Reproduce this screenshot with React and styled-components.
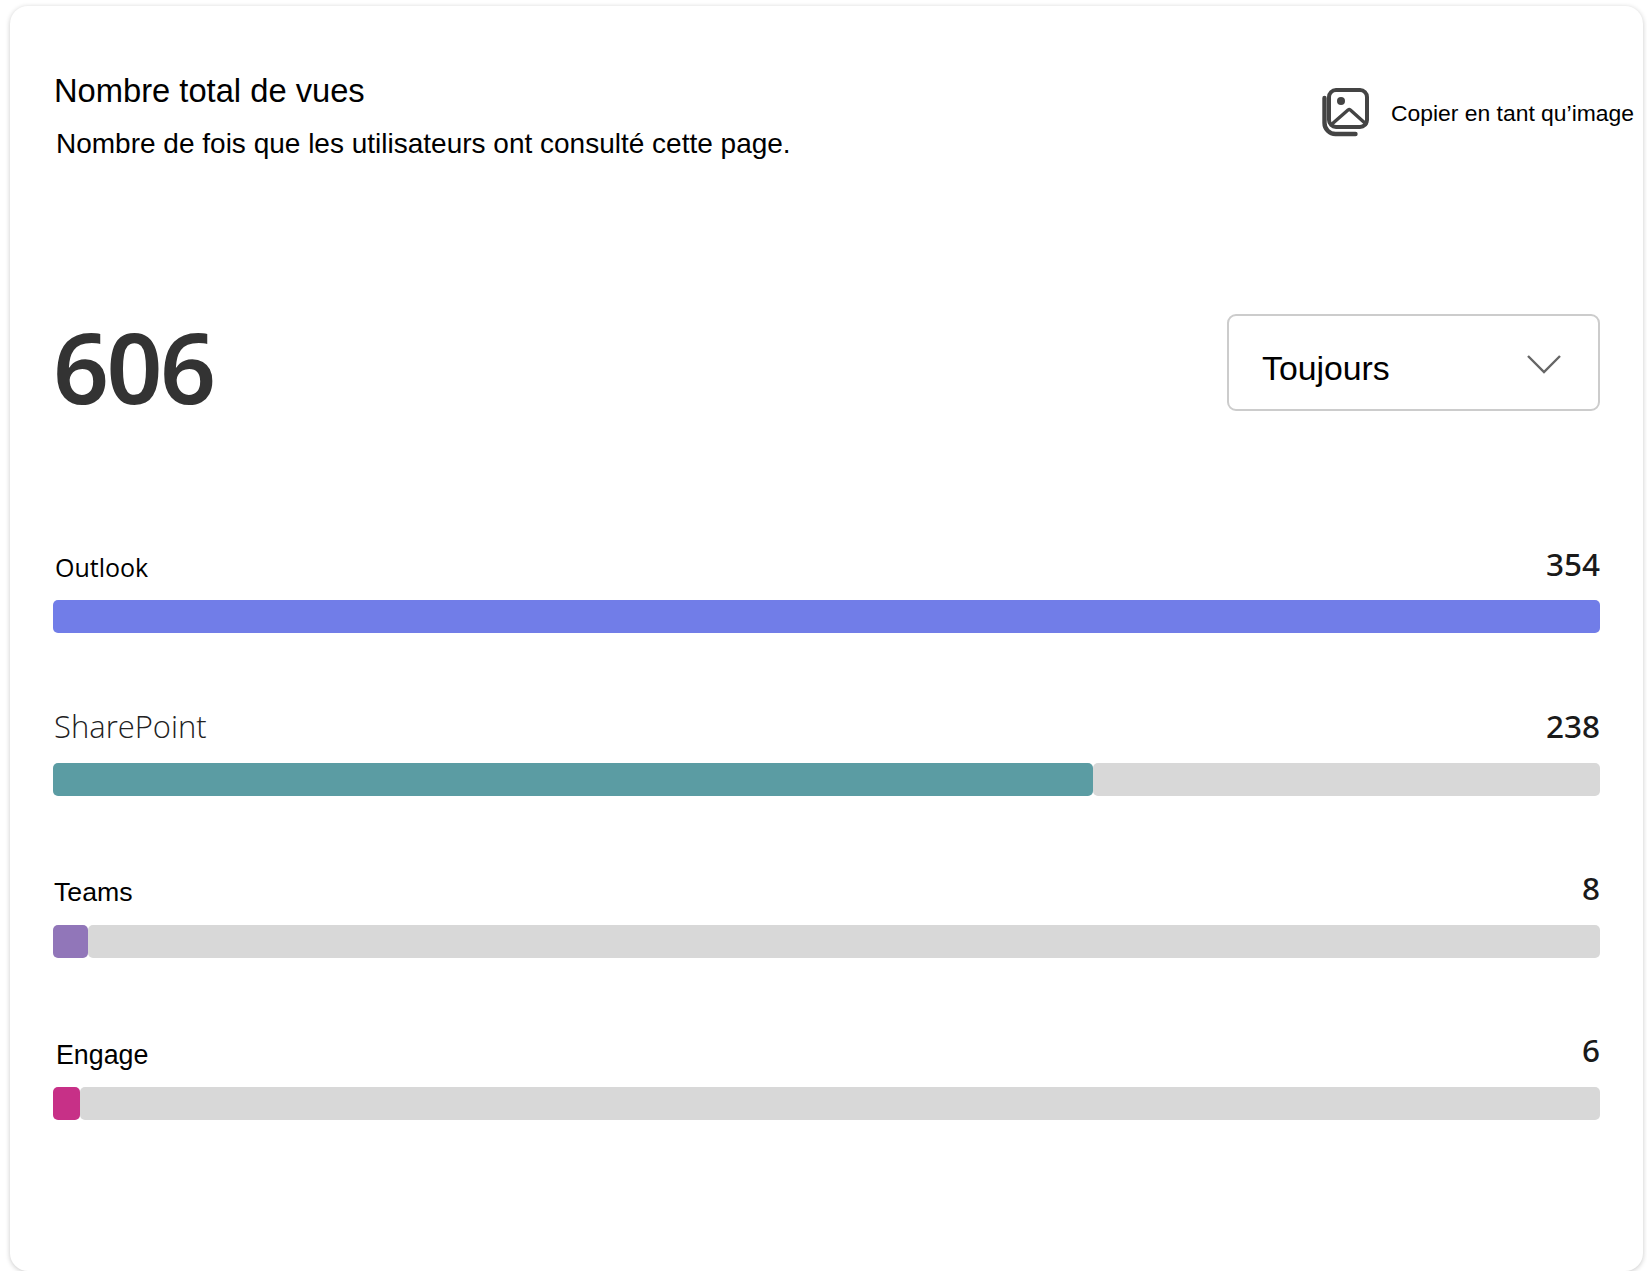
import React from "react";
import styled, { createGlobalStyle } from "styled-components";

const Global = createGlobalStyle`
  html, body { margin: 0; padding: 0; background: #fff; }
  body { overflow: hidden; }
`;
const Card = styled.div`
  box-sizing: border-box;
  margin: 6px 4px 0 10px;
  height: 1265px;
  padding: 0 43px;
  background: #fff;
  border-radius: 18px;
  box-shadow: 0 1px 5px rgba(0,0,0,.22);
  overflow: hidden;
`;
const Header = styled.div`
  display: flex;
  justify-content: space-between;
  align-items: flex-start;
  height: 308px;
  margin-right: -34px;
  padding-top: 67px;
  box-sizing: border-box;
`;
const Titles = styled.div`
  display: flex;
  flex-direction: column;
  padding-left: 1px;
`;
const Title = styled.h1`
  margin: 0;
  font: 400 32.7px/36px "Liberation Sans", sans-serif;
  color: #000;
`;
const Subtitle = styled.p`
  margin: 18px 0 0 2px;
  font: 400 28px/34px "Liberation Sans", sans-serif;
  color: #000;
`;
const CopyButton = styled.button`
  display: flex;
  align-items: center;
  gap: 20px;
  margin-top: 14px;
  padding: 0;
  border: 0;
  background: none;
  font: 400 22.9px/28px "Liberation Sans", sans-serif;
  color: #000;
`;
const CopyLabel = styled.span`
  margin-top: 2px;
`;
const Summary = styled.div`
  display: flex;
  justify-content: space-between;
  align-items: flex-start;
  height: 228.2px;
`;
const Total = styled.div`
  font: 600 98px/96px "Noto Sans", sans-serif;
  letter-spacing: -2.5px;
  color: #333;
  margin-top: 4px;
`;
const Select = styled.div`
  box-sizing: border-box;
  width: 373px;
  height: 97px;
  display: flex;
  justify-content: space-between;
  border: 2px solid #ccc;
  border-radius: 9px;
  padding: 32px 36px 0 33px;
  font: 400 33.8px/40px "Liberation Sans", sans-serif;
  color: #000;
`;
const ChevronWrap = styled.span`
  display: flex;
  margin-top: 6px;
`;
const Rows = styled.div`
  display: flex;
  flex-direction: column;
`;
const Row = styled.div`
  height: 162.4px;
`;
const RowHead = styled.div`
  display: flex;
  justify-content: space-between;
  align-items: flex-end;
  height: 44px;
  margin-bottom: 14px;
`;
const Label = styled.span`
  margin-left: ${(p) => p.$indent}px;
  padding-bottom: ${(p) => p.$lift}px;
  font-family: ${(p) => p.$family}, sans-serif;
  font-size: ${(p) => p.$size}px;
  font-weight: ${(p) => p.$weight};
  line-height: 36px;
  color: ${(p) => p.$color};
`;
const Value = styled.span`
  padding-bottom: ${(p) => p.$lift}px;
  font: 500 31.5px/40px "Noto Sans", sans-serif;
  color: #1a1a1a;
`;
const Track = styled.div`
  display: flex;
  height: 33px;
`;
const Fill = styled.div`
  height: 100%;
  background: ${(p) => p.$color};
  border-radius: 5px;
`;
const Rest = styled.div`
  flex: 1;
  height: 100%;
  background: #d8d8d8;
  border-radius: 5px;
`;

const ImagesIcon = () => (
  <svg width="50" height="50" viewBox="0 0 50 50" fill="none" stroke="#444" strokeLinecap="round" strokeLinejoin="round">
    <rect x="8" y="3" width="38" height="37" rx="7" strokeWidth="4" />
    <path d="M3.5 11v25a11 11 0 0 0 11 11h20" strokeWidth="4.4" />
    <path d="M11 37l16-14a2 2 0 0 1 2.4 0L45 37" strokeWidth="3.4" />
    <circle cx="20" cy="14" r="4" fill="#444" stroke="none" />
  </svg>
);
const Chevron = () => (
  <svg width="36" height="20" viewBox="0 0 36 20" fill="none" stroke="#666" strokeWidth="2.4">
    <path d="M2 2l16 16L34 2" />
  </svg>
);

const rows = [
  { name: "Outlook", value: 354, color: "#717de8", w: 1547, size: 25, family: '"Open Sans"', weight: 400, labelColor: "#000", indent: 2, lift: 1, vlift: 2 },
  { name: "SharePoint", value: 238, color: "#5b9ca3", w: 1040, size: 31, family: '"Open Sans"', weight: 300, labelColor: "#222", indent: 1, lift: 5, vlift: 3 },
  { name: "Teams", value: 8, color: "#9176b9", w: 35, size: 26.7, family: '"Liberation Sans"', weight: 400, labelColor: "#000", indent: 1, lift: 1, vlift: 3 },
  { name: "Engage", value: 6, color: "#c73087", w: 27, size: 26.8, family: '"Liberation Sans"', weight: 400, labelColor: "#000", indent: 3, lift: 0, vlift: 3 },
];

export default function App() {
  return (
    <>
      <Global />
      <Card>
        <Header>
          <Titles>
            <Title>Nombre total de vues</Title>
            <Subtitle>Nombre de fois que les utilisateurs ont consulté cette page.</Subtitle>
          </Titles>
          <CopyButton>
            <ImagesIcon />
            <CopyLabel>Copier en tant qu’image</CopyLabel>
          </CopyButton>
        </Header>
        <Summary>
          <Total>606</Total>
          <Select>
            Toujours
            <ChevronWrap><Chevron /></ChevronWrap>
          </Select>
        </Summary>
        <Rows>
          {rows.map((r) => (
            <Row key={r.name}>
              <RowHead>
                <Label $indent={r.indent} $lift={r.lift} $family={r.family} $size={r.size} $weight={r.weight} $color={r.labelColor}>{r.name}</Label>
                <Value $lift={r.vlift}>{r.value}</Value>
              </RowHead>
              <Track>
                <Fill $color={r.color} style={{ width: r.w }} />
                {r.w < 1547 && <Rest />}
              </Track>
            </Row>
          ))}
        </Rows>
      </Card>
    </>
  );
}
